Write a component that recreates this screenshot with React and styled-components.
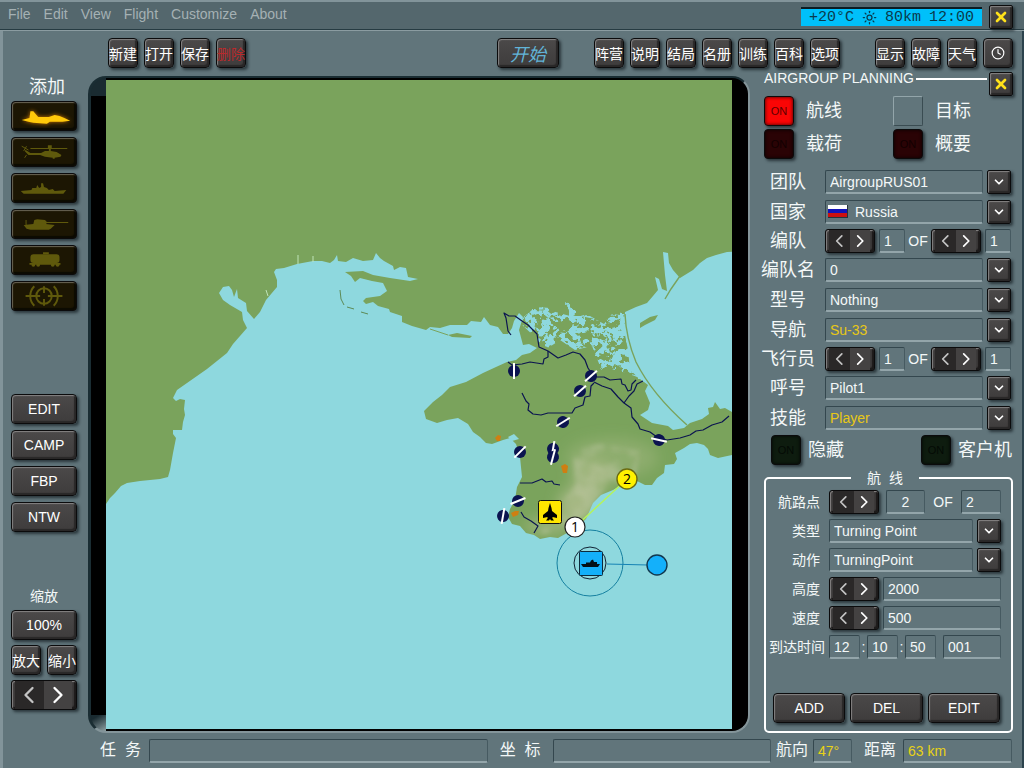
import React, { useRef } from 'react';
import styled, { createGlobalStyle, css } from 'styled-components';
import { X, Clock4, ChevronDown, ChevronLeft, ChevronRight, Sun } from 'lucide-react';

const addIcons = [
  { name: 'plane', node: <PlaneSide /> },
  { name: 'helicopter', node: <HeliSide /> },
  { name: 'ship', node: <ShipSide /> },
  { name: 'vehicle', node: <TankSide /> },
  { name: 'train', node: <WagonSide /> },
  { name: 'target', node: <TargetMark /> },
];

const airfields = [
  [514, 371, 90],
  [591, 376, -42],
  [580, 391, -42],
  [563, 422, -32],
  [520, 452, -45],
  [553, 449, -80],
  [553, 457, -75],
  [659, 440, 12],
  [518, 501, -22],
  [503, 516, -80],
];

function App() {
  return (
    <>
      <GlobalStyle />
      <Page>
        <MenuBar>
          <Menu>
            {['File', 'Edit', 'View', 'Flight', 'Customize', 'About'].map((m) => (
              <MenuItem key={m} href='#'>
                {m}
              </MenuItem>
            ))}
          </Menu>
          <Lcd>
            <span>+20°C</span>
            <Sun size={15} strokeWidth={2} />
            <span>80km</span>
            <span>12:00</span>
          </Lcd>
          <CloseKey />
        </MenuBar>

        <Toolbar>
          <KeyGroup $first>
            <Key>新建</Key>
            <Key>打开</Key>
            <Key>保存</Key>
            <Key $red>删除</Key>
          </KeyGroup>
          <StartKey>开始</StartKey>
          <KeyGroup>
            {['阵营', '说明', '结局', '名册', '训练', '百科', '选项'].map((t) => (
              <Key key={t}>{t}</Key>
            ))}
          </KeyGroup>
          <KeyGroup>
            <Key>显示</Key>
            <Key>故障</Key>
            <Key>天气</Key>
            <Key aria-label='clock'>
              <Clock4 size={14} strokeWidth={2} />
            </Key>
          </KeyGroup>
        </Toolbar>

        <Body>
          <Sidebar>
            <SideTitle>添加</SideTitle>
            <SideGroup>
              {addIcons.map((i, n) => (
                <UnitKey key={i.name} aria-label={i.name} $lit={n === 0}>
                  {i.node}
                </UnitKey>
              ))}
            </SideGroup>
            <SideGroup $mid>
              <TextKey>EDIT</TextKey>
              <TextKey>CAMP</TextKey>
              <TextKey>FBP</TextKey>
              <TextKey>NTW</TextKey>
            </SideGroup>
            <ZoomTitle>缩放</ZoomTitle>
            <ZoomGroup>
              <TextKey>100%</TextKey>
              <KeyPair>
                <Key>放大</Key>
                <Key>缩小</Key>
              </KeyPair>
              <Stepper name='zoom' wide />
            </ZoomGroup>
          </Sidebar>

          <MapFrame>
            <MapView />
          </MapFrame>

          <Panel>
            <PanelHead>
              <PanelTitle>AIRGROUP PLANNING</PanelTitle>
              <PanelRule />
              <CloseKey />
            </PanelHead>
            <Modes>
              <Toggle id='route' label='航线' tone='red' on />
              <Toggle id='target' label='目标' tone='none' />
              <Toggle id='load' label='载荷' tone='red' />
              <Toggle id='summary' label='概要' tone='red' />
            </Modes>

            <Rows>
              <Combo id='group' label='团队' value='AirgroupRUS01' />
              <Combo id='country' label='国家' value='Russia' flag />
              <Counter id='flight' label='编队' />
              <Combo id='flightname' label='编队名' value='0' />
              <Combo id='model' label='型号' value='Nothing' />
              <Combo id='lead' label='导航' value='Su-33' yellow />
              <Counter id='pilot' label='飞行员' />
              <Combo id='callsign' label='呼号' value='Pilot1' />
              <Combo id='skill' label='技能' value='Player' yellow />
            </Rows>

            <Options>
              <Toggle id='hidden' label='隐藏' tone='green' tight />
              <Toggle id='client' label='客户机' tone='green' tight />
            </Options>

            <RouteBox>
              <RouteLegend>航&nbsp; 线</RouteLegend>
              <RouteRows>
                <RouteRow>
                  <RouteLabel htmlFor='wp'>航路点</RouteLabel>
                  <Stepper name='waypoint' />
                  <Cell $w={39} $left={3}>
                    <TextInput id='wp' defaultValue='2' $center />
                  </Cell>
                  <Of>OF</Of>
                  <Cell $w={40}>
                    <TextInput aria-label='waypoint count' defaultValue='2' />
                  </Cell>
                </RouteRow>
                <RouteCombo id='wptype' label='类型' value='Turning Point' />
                <RouteCombo id='action' label='动作' value='TurningPoint' />
                <RouteRow>
                  <RouteLabel htmlFor='alt'>高度</RouteLabel>
                  <Stepper name='altitude' />
                  <Cell>
                    <TextInput id='alt' defaultValue='2000' />
                  </Cell>
                </RouteRow>
                <RouteRow>
                  <RouteLabel htmlFor='speed'>速度</RouteLabel>
                  <Stepper name='speed' />
                  <Cell>
                    <TextInput id='speed' defaultValue='500' />
                  </Cell>
                </RouteRow>
                <RouteRow>
                  <RouteLabel htmlFor='hh' $long>
                    到达时间
                  </RouteLabel>
                  <Times>
                    <Cell $w={31}>
                      <TextInput id='hh' defaultValue='12' />
                    </Cell>
                    <Colon>:</Colon>
                    <Cell $w={31}>
                      <TextInput aria-label='minutes' defaultValue='10' />
                    </Cell>
                    <Colon>:</Colon>
                    <Cell $w={31}>
                      <TextInput aria-label='seconds' defaultValue='50' />
                    </Cell>
                    <Cell $left={7}>
                      <TextInput aria-label='day' defaultValue='001' />
                    </Cell>
                  </Times>
                </RouteRow>
              </RouteRows>
              <RouteActions>
                <TextKey>ADD</TextKey>
                <TextKey>DEL</TextKey>
                <TextKey>EDIT</TextKey>
              </RouteActions>
            </RouteBox>
          </Panel>
        </Body>

        <StatusBar>
          <StatusMain>
            <StatusLabel htmlFor='task'>任&nbsp; 务</StatusLabel>
            <Cell $grow={14}>
              <TextInput id='task' />
            </Cell>
            <StatusLabel htmlFor='coord' $roomy>
              坐&nbsp; 标
            </StatusLabel>
            <Cell $grow={9}>
              <TextInput id='coord' />
            </Cell>
          </StatusMain>
          <StatusSide>
            <StatusLabel htmlFor='heading'>航向</StatusLabel>
            <Cell $w={39}>
              <TextInput id='heading' defaultValue='47°' $yellow />
            </Cell>
            <StatusLabel htmlFor='range' $apart>
              距离
            </StatusLabel>
            <Cell>
              <TextInput id='range' defaultValue='63 km' $yellow />
            </Cell>
          </StatusSide>
        </StatusBar>
      </Page>
    </>
  );
}

export default App;

function CloseKey() {
  return (
    <SmallKey aria-label='close' $yellow>
      <X size={16} strokeWidth={4} />
    </SmallKey>
  );
}

function Stepper({ name, wide }) {
  return (
    <StepWrap $wide={wide}>
      <StepKey aria-label={name + ' previous'} $dim>
        <ChevronLeft size={wide ? 28 : 22} strokeWidth={2} />
      </StepKey>
      <StepKey aria-label={name + ' next'}>
        <ChevronRight size={wide ? 28 : 22} strokeWidth={2} />
      </StepKey>
    </StepWrap>
  );
}

function Toggle({ id, label, tone, on, tight }) {
  return (
    <ToggleWrap $tight={tight}>
      <ToggleKey id={id} $tone={tone} $on={on} aria-pressed={!!on}>
        {tone === 'none' ? '' : 'ON'}
      </ToggleKey>
      <ToggleLabel htmlFor={id}>{label}</ToggleLabel>
    </ToggleWrap>
  );
}

function Picker({ id, value, flag, yellow }) {
  const ref = useRef(null);
  return (
    <>
      <Cell>
        {flag && <Flag />}
        <Select id={id} ref={ref} $yellow={yellow}>
          <option>{value}</option>
        </Select>
      </Cell>
      <SmallKey aria-label={'open ' + id} onClick={() => ref.current.showPicker()}>
        <ChevronDown size={14} strokeWidth={3} />
      </SmallKey>
    </>
  );
}

function Combo({ id, label, ...rest }) {
  return (
    <Row>
      <Label htmlFor={id}>{label}</Label>
      <RowBody>
        <Picker id={id} {...rest} />
      </RowBody>
    </Row>
  );
}

function RouteCombo({ id, label, ...rest }) {
  return (
    <RouteRow>
      <RouteLabel htmlFor={id}>{label}</RouteLabel>
      <Picker id={id} {...rest} />
    </RouteRow>
  );
}

function Counter({ id, label }) {
  return (
    <Row $low>
      <Label htmlFor={id}>{label}</Label>
      <RowBody>
        <Stepper name={id} />
        <Cell $w={26}>
          <TextInput id={id} defaultValue='1' />
        </Cell>
        <Of $close>OF</Of>
        <Stepper name={id + ' total'} />
        <Cell $w={26}>
          <TextInput aria-label={id + ' total'} defaultValue='1' />
        </Cell>
      </RowBody>
    </Row>
  );
}

function MapView() {
  return (
    <MapSvg viewBox='106 80 626 649' preserveAspectRatio='xMidYMid slice'>
      <defs>
        <filter id='soft' x='-50%' y='-50%' width='200%' height='200%'>
          <feGaussianBlur stdDeviation='7' />
        </filter>
        <filter id='ridge' x='-20%' y='-20%' width='140%' height='140%' colorInterpolationFilters='sRGB'>
          <feTurbulence type='fractalNoise' baseFrequency='0.06' numOctaves='3' seed='4' />
          <feColorMatrix values='0 0 0 0 0.78  0 0 0 0 0.8  0 0 0 0 0.68  0 4 0 0 -1.6' />
          <feComposite in2='SourceGraphic' operator='in' />
          <feGaussianBlur stdDeviation='2' />
        </filter>
        <filter id='marsh' x='0' y='0' width='100%' height='100%' colorInterpolationFilters='sRGB'>
          <feTurbulence type='fractalNoise' baseFrequency='0.13 0.15' numOctaves='3' seed='12' />
          <feColorMatrix values='0 0 0 0 0.557  0 0 0 0 0.847  0 0 0 0 0.871  20 0 0 0 -9.4' />
          <feComposite in2='SourceGraphic' operator='in' />
        </filter>
        <filter id='islets' x='0' y='0' width='100%' height='100%' colorInterpolationFilters='sRGB'>
          <feTurbulence type='fractalNoise' baseFrequency='0.14' numOctaves='3' seed='31' />
          <feColorMatrix values='0 0 0 0 0.478  0 0 0 0 0.639  0 0 0 0 0.361  20 0 0 0 -10.8' />
          <feComposite in2='SourceGraphic' operator='in' />
        </filter>
        <filter id='coast' x='-10%' y='-10%' width='120%' height='120%'>
          <feTurbulence type='fractalNoise' baseFrequency='0.2' numOctaves='2' seed='3' />
          <feDisplacementMap in='SourceGraphic' scale='9' xChannelSelector='R' yChannelSelector='G' />
        </filter>
      </defs>

      <rect x='-400' y='-400' width='2000' height='2000' fill='#7aa35c' />

      {/* mountains */}
      <g fill='#b9c296' filter='url(#soft)'>
        <ellipse cx='612' cy='458' rx='46' ry='20' opacity='0.3' />
        <ellipse cx='592' cy='478' rx='20' ry='17' opacity='0.55' />
        <ellipse cx='576' cy='506' rx='18' ry='18' opacity='0.7' />
        <ellipse cx='547' cy='526' rx='22' ry='7' opacity='0.6' />
      </g>
      <path
        d='M572 450 L600 444 L640 450 L636 474 L605 490 L585 515 L565 532 L540 534 L556 512 L576 484 Z'
        fill='#fff'
        opacity='0.4'
        filter='url(#ridge)'
      />

      {/* Sivash */}
      <path
        filter='url(#marsh)'
        fill='#8ed8de'
        d='M519 322 L533 308 L552 311 L570 316 L590 316 L604 324 L612 314 L628 316 L632 350 L644 380 L630 374 L600 366 L592 346 L575 350 L560 340 L545 350 L536 338 Z'
      />
      <g filter='url(#coast)' fill='#8ed8de'>
        <path d='M524 318 L534 309 L550 310 L556 322 L546 328 L536 322 L530 326 Z' />
        <path d='M566 302 L571 305 L576 314 L570 317 L567 312 Z' />
        <path d='M570 320 L584 316 L588 324 L606 330 L598 336 L584 330 L574 332 Z' />
        <path d='M608 318 L626 314 L632 345 L644 380 L632 375 L622 366 L600 368 L610 356 L616 344 L608 336 Z' />
        <path d='M596 344 L610 340 L604 352 L596 356 Z' />
      </g>
      <path
        filter='url(#islets)'
        d='M522 318 L534 308 L552 310 L590 318 L626 314 L630 350 L640 376 L600 368 L590 336 L540 330 Z'
      />

      {/* Azov sea */}
      <path
        fill='#8ed8de'
        d='M625 312 L636 307 L647 303 L653 296 L658 290 L655 277 L659 279 L662 289 L667 291 L665 275 L663 252 L668 253 L669 263 L673 270 L680 278 L693 270 L700 263 L707 258 L716 255 L727 252 L760 250 L760 412 L732 412 L725 408 L720 409 L715 402 L713 407 L708 408 L709 414 L702 419 L690 423 L684 428 L673 430 L668 426 L652 423 L640 415 L648 410 L650 403 L645 391 L648 385 L640 379 L630 370 L628 350 L624 330 Z'
      />
      <path
        d='M625 314 Q626 338 636 362 Q652 394 687 425'
        fill='none'
        stroke='#7aa35c'
        strokeWidth='1.4'
      />
      <path d='M640 323 L650 317 L658 315 L655 320 L645 325 L640 328 Z' fill='#7aa35c' />
      <path d='M665 299 L671 289 L680 276' fill='none' stroke='#7aa35c' strokeWidth='1.4' />

      {/* Black sea */}
      <path
        fill='#8ed8de'
        d='M106 504 L110 498 L115 493 L121 486 L127 483 L140 481 L160 479 L168 477 L170 470 L173 453 L176 438 L173 434 L173 430 L182 430 L183 422 L185 415 L184 409 L185 400 L180 399 L176 401 L173 398 L177 390 L187 383 L207 369 L227 353 L233 344 L247 328 L243 320 L242 312 L230 305 L223 300 L219 293 L223 287 L229 286 L232 290 L234 297 L237 289 L238 298 L246 303 L247 311 L254 319 L260 312 L266 300 L277 287 L277 280 L274 272 L276 269 L284 268 L297 264 L313 261 L322 261 L330 263 L334 260 L337 255 L338 261 L346 262 L353 258 L363 261 L373 260 L376 253 L380 258 L384 261 L393 266 L394 270 L400 267 L406 268 L408 277 L418 279 L410 281 L390 278 L373 275 L363 271 L345 272 L351 276 L355 282 L360 278 L372 281 L383 283 L387 291 L380 296 L373 297 L366 298 L363 301 L366 304 L373 302 L378 306 L389 309 L390 312 L402 316 L402 322 L412 326 L426 330 L430 327 L440 328 L450 325 L467 325 L471 321 L481 322 L484 317 L490 325 L498 327 L503 334 L508 334 L512 328 L514 321 L519 313 L523 317 L519 330 L523 345 L529 344 L537 348 L530 353 L522 355 L516 360 L507 362 L496 367 L483 373 L466 382 L450 387 L442 395 L433 402 L424 411 L426 419 L437 423 L447 420 L458 418 L468 424 L473 432 L480 437 L486 443 L492 444 L503 440 L510 438 L516 444 L520 457 L522 477 L517 487 L515 500 L510 509 L508 517 L512 524 L520 526 L526 533 L534 535 L540 539 L550 537 L558 538 L567 533 L576 528 L586 519 L593 503 L601 495 L613 490 L622 485 L637 481 L645 485 L652 485 L657 478 L664 473 L665 465 L674 464 L677 459 L675 453 L684 448 L690 444 L697 443 L704 445 L708 449 L710 455 L718 458 L732 455 L800 455 L800 1000 L-100 1000 L-100 504 Z'
      />
      <path d='M340 290 L341 299 L344 305 M347 307 L354 309 M361 312 L368 314' stroke='#5d8a55' fill='none' />
      <path d='M448 335 L457 333 L472 336 L470 338 L452 337 Z' fill='#7aa35c' />
      <path d='M430 329 L448 335' stroke='#7aa35c' fill='none' />
      <path d='M508 437 L514 434 L519 439 L512 441 Z' fill='#8ed8de' />
      <path d='M298 255 V264 M313 256 V262 M266 290 L268 296' stroke='#bfe4b8' fill='none' />

      {/* railways */}
      <g fill='none' stroke='#0b1450' strokeWidth='1.2' strokeLinejoin='round'>
        <path d='M511 335 L508 331 L506 318 L504 313 L509 316 L515 316 L522 321 L528 325 L534 331 L537 334 L539 347 L548 351 L558 358 L566 355 L573 352 L580 354 L585 360 L588 368 L592 374' />
        <path d='M508 362 L512 365 L522 364 L530 362 L543 364 L544 359 L548 357 L548 351' />
        <path d='M522 393 L526 401 L529 404 L528 410 L533 414 L541 415 L548 413 L572 413 L575 408 L583 405 L585 397 L590 396 L591 386 L594 383' />
        <path d='M594 382 L602 386 L611 389 L618 397 L624 403 L631 408 L632 417 L638 424 L640 429 L650 432 L657 437 L667 440 L680 438 L690 435 L696 431 L703 430 L712 425 L722 422 L729 416' />
        <path d='M595 377 L604 377 L610 380 L621 379 L622 384 L625 385 L628 391 L631 390 L632 384 L636 380' />
        <path d='M624 403 L629 396 L634 391 L637 384 L643 381' />
        <path d='M520 483 L532 483 L542 479 L546 482 L552 481 L554 484 L560 485' />
        <path d='M521 512 L524 517 L531 521 L538 526 L534 533' />
      </g>

      {airfields.map(([x, y, a]) => (
        <g key={x + '-' + y} transform={`translate(${x} ${y}) rotate(${a})`}>
          <circle r='6' fill='#0b1450' />
          <path d='M-8 0 H8' stroke='#fff' strokeWidth='2' />
        </g>
      ))}
      <g fill='#cf7f12'>
        <path d='M495 438 L498 435 L501 436 L500 441 L497 441 Z' />
        <path d='M561 466 L565 464 L568 466 L567 473 L563 473 Z' />
        <path d='M511 513 L515 511 L519 511 L518 515 L513 517 Z' />
      </g>

      {/* route */}
      <path d='M575 527 L627 479' stroke='#b5f45a' strokeWidth='1.5' />
      <circle cx='590' cy='563' r='33' fill='none' stroke='#1580a0' />
      <circle cx='590' cy='563' r='16' fill='none' stroke='#123' />
      <path d='M607 564 L648 565' stroke='#1583b5' />
      <circle cx='657' cy='565' r='10' fill='#14b0fa' stroke='#12384e' strokeWidth='1.4' />
      <circle cx='627' cy='479' r='10' fill='#fff200' stroke='#6a6a12' strokeWidth='1.4' />
      <circle cx='575' cy='527' r='10' fill='#fff' stroke='#222' strokeWidth='1.2' />
      <MapText x='627' y='484'>2</MapText>
      <MapText x='575' y='532'>1</MapText>

      <rect x='538.5' y='500.5' width='23' height='23' rx='2' fill='#ffe600' stroke='#111' />
      <path
        d='M550 503 L551.5 508 L552 511 L557 515 V518 L552.5 517 V518.5 L554 520.5 L551 520.5 L550 519 L549 520.5 L546 520.5 L547.5 518.5 V517 L543 518 V515 L548 511 L548.5 508 Z'
        fill='#000'
      />
      <rect x='579.5' y='551.5' width='23' height='24' rx='1' fill='#14b0fa' stroke='#0c2a3c' />
      <path
        d='M581 564 H586 V562.500 H590 L591 560.500 L593 559.500 L594 562 L597 562 V564 H600 L598 567 H583 Z'
        fill='#031018'
      />
    </MapSvg>
  );
}

function PlaneSide() {
  return (
    <UnitSvg viewBox='0 0 66 30'>
      <path d='M10 19 L18 17 L19 10 L22 10 L27 16 L38 16 L44 14 L49 15 L54 17 L60 20 L52 21 L39 21 L36 23 L22 22 L17 21 Z' />
    </UnitSvg>
  );
}

function HeliSide() {
  return (
    <UnitSvg viewBox='0 0 66 30'>
      <path d='M19 11 H57 V12 H40 V14 L46 15 L51 18 L50 20 L44 21 V22 H42 V21 L34 20 L29 18 L17 18 L13 14 L14 13 L19 16 L30 16 L34 14 L38 14 V12 H19 Z M37 8 H41 V11 H37 Z' />
      <path d='M10 9 L17 13 M12 14 L15 9 M15 18 L13 21' stroke='currentColor' />
    </UnitSvg>
  );
}

function ShipSide() {
  return (
    <UnitSvg viewBox='0 0 66 30'>
      <path d='M9 18 L20 17 L21 15 L25 15 L26 12 L28 15 L30 14 L30 10 L32 10 L33 14 L36 15 L38 17 L42 16 L44 18 L56 17 L53 21 L12 21 Z' />
    </UnitSvg>
  );
}

function TankSide() {
  return (
    <UnitSvg viewBox='0 0 66 30'>
      <path d='M12 16 L22 15 L23 11 L26 10 L34 11 L36 13 H58 V14 H36 L35 15 L44 16 L40 20 L38 21 H19 L15 20 Z M14 11 H15 V16 H14 Z' />
    </UnitSvg>
  );
}

function WagonSide() {
  return (
    <UnitSvg viewBox='0 0 66 30'>
      <rect x='19' y='9' width='30' height='9' rx='3' />
      <path d='M32 7 H38 V9 H32 Z M18 18 H50 V20 H18 Z' />
      <circle cx='22' cy='20' r='2' />
      <circle cx='27' cy='20' r='2' />
      <circle cx='42' cy='20' r='2' />
      <circle cx='47' cy='20' r='2' />
    </UnitSvg>
  );
}

function TargetMark() {
  return (
    <UnitSvg viewBox='0 0 66 30'>
      <g fill='none' stroke='currentColor' strokeWidth='2'>
        <circle cx='33' cy='15' r='8' />
        <path d='M23 5 A14 14 0 0 0 23 25 M43 5 A14 14 0 0 1 43 25 M14 15 H29 M37 15 H52 M33 5 V12 M33 18 V25' />
      </g>
    </UnitSvg>
  );
}

const GlobalStyle = createGlobalStyle`
  * {
    box-sizing: border-box;
  }
  body {
    margin: 0;
    background: #61757b;
    font-family: 'Liberation Sans', 'Noto Sans CJK SC', sans-serif;
    font-size: 14px;
    color: #f4f8f8;
  }
  button, input, select {
    font: inherit;
    color: inherit;
  }
`;

const Page = styled.div`
  display: flex;
  flex-direction: column;
  min-height: 100vh;
  background: #61757b;
  border-bottom: 2px solid #46585e;
  box-shadow: inset 3px 0 0 #82949a, inset -2px 0 0 #2c434d;
`;

const MenuBar = styled.header`
  display: flex;
  align-items: center;
  gap: 7px;
  height: 30px;
  padding: 2px 11px 0 8px;
  background: #54676d;
  border-top: 2px solid #82949a;
  border-bottom: 1px solid #263b42;
  box-shadow: 0 1px 0 #8b9ca1;
`;
const Menu = styled.nav`
  display: flex;
  gap: 13px;
  margin-right: auto;
  padding-bottom: 5px;
`;
const MenuItem = styled.a`
  color: #a5b1b4;
  text-decoration: none;
`;
const Lcd = styled.div`
  display: flex;
  align-items: center;
  justify-content: center;
  gap: 8px;
  width: 181px;
  height: 19px;
  border-top: 2px solid #0b1c22;
  background: #00c0fa;
  color: #0a3a4c;
  font-family: 'Liberation Mono', monospace;
  font-size: 15px;
`;

const keyLook = css`
  display: flex;
  align-items: center;
  justify-content: center;
  padding: 0;
  border: 1px solid #0b0b0c;
  border-radius: 4px;
  background: linear-gradient(#4b4949, #3e3c3c);
  box-shadow: inset 1px 1px 1px #858383, inset -2px -2px 1px #292727, 2px 2px 3px rgba(20, 30, 34, 0.7);
  color: #fff;
  white-space: nowrap;
`;

const Toolbar = styled.div`
  display: flex;
  gap: 35px;
  padding: 8px 11px 2px 108px;
`;
const KeyGroup = styled.div`
  display: flex;
  gap: 6px;
  margin-right: ${(p) => (p.$first ? 'auto' : '0')};
`;
const Key = styled.button`
  ${keyLook}
  width: 30px;
  height: 30px;
  font-size: 14px;
  color: ${(p) => (p.$red ? '#b92a2c' : '#fff')};
`;
const StartKey = styled(Key)`
  width: 62px;
  font-size: 18px;
  font-style: italic;
  color: #62b4d8;
`;
const TextKey = styled(Key)`
  flex: 1 0 30px;
  width: 100%;
  padding-bottom: 1px;
`;
const SmallKey = styled.button`
  ${keyLook}
  flex: none;
  width: 24px;
  height: 24px;
  border-radius: 2px;
  color: ${(p) => (p.$yellow ? '#ffe11a' : '#fff')};
`;

const Body = styled.main`
  display: flex;
  flex: 1;
`;

const Sidebar = styled.aside`
  display: flex;
  flex-direction: column;
  width: 88px;
  padding: 5px 11px 0;
`;
const SideTitle = styled.h2`
  margin: 0 0 2px;
  padding-left: 6px;
  font-size: 18px;
  font-weight: 400;
  line-height: 24px;
  text-align: center;
`;
const SideGroup = styled.div`
  display: flex;
  flex-direction: column;
  gap: 6px;
  margin-top: ${(p) => (p.$mid ? '83px' : '0')};
`;
const ZoomTitle = styled(SideTitle)`
  margin: 52px 0 2px;
  padding: 0;
  font-size: 14px;
`;
const ZoomGroup = styled.div`
  display: flex;
  flex-direction: column;
  gap: 5px;
`;
const KeyPair = styled.div`
  display: flex;
  justify-content: space-between;
`;
const UnitKey = styled.button`
  ${keyLook}
  height: 30px;
  background: #1c1603;
  box-shadow: inset 1px 1px 1px #6a6455, inset -2px -2px 1px #0c0a02, 2px 2px 3px rgba(20, 30, 34, 0.7);
  color: ${(p) => (p.$lit ? '#ffc90a' : '#5f590c')};
  ${(p) =>
    p.$lit &&
    css`
      svg {
        filter: drop-shadow(0 0 2px #d07a00);
      }
    `}
`;
const UnitSvg = styled.svg`
  width: 66px;
  height: 30px;
  fill: currentColor;
`;

const StepWrap = styled.div`
  display: flex;
  flex: none;
  width: ${(p) => (p.$wide ? '100%' : '50px')};
  height: ${(p) => (p.$wide ? '30px' : '24px')};
  padding: 0 4px 0 3px;
  border: 1px solid #0b0b0c;
  border-radius: 3px;
  background: #3c3a3a;
  box-shadow: inset 1px 1px 1px #858383, inset -2px -2px 1px #1c1a1a, 2px 2px 3px rgba(20, 30, 34, 0.7);
`;
const StepKey = styled.button`
  display: flex;
  flex: 1;
  align-items: center;
  justify-content: center;
  min-width: 0;
  padding: 0;
  border: 0;
  background: ${(p) => (p.$dim ? '#2a2828' : '#444242')};
  color: ${(p) => (p.$dim ? '#c4c4c4' : '#fff')};
`;

const MapFrame = styled.section`
  display: flex;
  flex: 1;
  min-width: 0;
  margin-top: 6px;
  padding: 2px 16px 2px 15px;
  border: 2px solid #1a2d33;
  border-left-width: 3px;
  border-right-color: #84959a;
  border-bottom-color: #84959a;
  border-radius: 18px;
  background:
    linear-gradient(#1a2b31, #1a2b31) 0 0 / 15px 18px no-repeat,
    linear-gradient(150deg, #1a2b31 20%, #8fa0a4) 0 100% / 15px 16px no-repeat,
    #000;
`;
const MapSvg = styled.svg`
  display: block;
  flex: 1;
  width: 100%;
  min-width: 0;
  height: auto;
`;
const MapText = styled.text`
  font-family: 'Open Sans', sans-serif;
  font-size: 14px;
  text-anchor: middle;
  fill: #000;
`;

const Panel = styled.section`
  display: flex;
  flex-direction: column;
  width: 274px;
  padding: 0 11px 0 14px;
`;
const PanelHead = styled.div`
  display: flex;
  align-items: flex-start;
  gap: 2px;
  height: 26px;
  ${SmallKey} {
    margin-top: 2px;
  }
`;
const PanelTitle = styled.h1`
  margin: 0;
  font-size: 14px;
  font-weight: 400;
  line-height: 16px;
`;
const PanelRule = styled.hr`
  flex: 1;
  height: 2px;
  margin: 8px 0 0;
  border: 0;
  background: #fff;
`;

const Modes = styled.div`
  display: grid;
  grid-template-columns: 129px 1fr;
  row-gap: 3px;
`;
const Options = styled.div`
  display: grid;
  grid-template-columns: 150px 1fr;
  margin-top: 5px;
  padding-left: 7px;
`;
const ToggleWrap = styled.div`
  display: flex;
  align-items: center;
  gap: ${(p) => (p.$tight ? '7px' : '12px')};
`;
const tones = {
  red: ['#2a0305', '#120001'],
  redOn: ['#fa0505', '#5e0000'],
  green: ['#0e1c0f', '#040a05'],
  none: ['#61757b', '#61757b'],
};
const toneOf = (p) => tones[p.$on ? p.$tone + 'On' : p.$tone];
const ToggleKey = styled.button`
  ${keyLook}
  width: 30px;
  height: 30px;
  font-size: 11px;
  background: ${(p) => toneOf(p)[0]};
  color: ${(p) => toneOf(p)[1]};
  box-shadow: inset 0 0 3px 1px rgba(0, 0, 0, 0.5), 2px 2px 3px rgba(20, 30, 34, 0.7);
  ${(p) =>
    p.$tone === 'none' &&
    css`
      border-color: #93a5aa #3a4c52 #3a4c52 #93a5aa;
      border-radius: 2px;
      box-shadow: none;
    `}
`;
const ToggleLabel = styled.label`
  font-size: 18px;
  line-height: 24px;
  white-space: nowrap;
`;

const Rows = styled.div`
  display: flex;
  flex-direction: column;
  gap: 6px;
  margin: 11px 0 0 -4px;
  padding-right: 2px;
`;
const Row = styled.div`
  display: flex;
  align-items: center;
  gap: 9px;
  height: ${(p) => (p.$low ? '22px' : '24px')};
`;
const Label = styled.label`
  flex: none;
  width: 56px;
  font-size: 18px;
  line-height: 24px;
  text-align: center;
`;
const RowBody = styled.div`
  display: flex;
  flex: 1;
  align-items: center;
  gap: 4px;
  min-width: 0;
`;
const Cell = styled.div`
  display: flex;
  align-items: center;
  flex: ${(p) => (p.$w ? `0 0 ${p.$w}px` : `${p.$grow || 1} 1 0`)};
  min-width: 0;
  height: 24px;
  margin-left: ${(p) => p.$left || 0}px;
  border: 1px solid #34474e;
  border-right-color: #465a61;
  border-bottom: 2px solid #93a5aa;
  border-radius: 2px;
`;
const TextInput = styled.input`
  width: 100%;
  min-width: 0;
  padding: 0 4px;
  border: 0;
  outline: 0;
  background: none;
  color: ${(p) => (p.$yellow ? '#e8d216' : '#f4f8f8')};
  text-align: ${(p) => (p.$center ? 'center' : 'left')};
`;
const Select = styled.select`
  flex: 1;
  min-width: 0;
  padding: 0 4px;
  border: 0;
  outline: 0;
  appearance: none;
  background: none;
  color: ${(p) => (p.$yellow ? '#e8c816' : '#f4f8f8')};
`;
const Flag = styled.span`
  width: 20px;
  height: 13px;
  margin: 0 3px 0 2px;
  border: 1px solid #26333a;
  border-width: 0 1px 1px 0;
  background: linear-gradient(#fff 33%, #1212b8 33% 66%, #cc1010 66%);
`;
const Of = styled.span`
  flex: 1;
  margin: ${(p) => (p.$close ? '0 -4px' : '0')};
  text-align: center;
`;

const RouteBox = styled.fieldset`
  min-width: 0;
  margin: 5px 0 0;
  padding: 4px 10px 8px 3px;
  border: 2px solid #fff;
  border-radius: 5px;
`;
const RouteLegend = styled.legend`
  margin: 0 auto;
  padding: 0 16px;
  font-size: 14px;
  line-height: 16px;
`;
const RouteRows = styled.div`
  display: flex;
  flex-direction: column;
  gap: 5px;
`;
const RouteRow = styled.div`
  display: flex;
  align-items: center;
  gap: 4px;
  height: 24px;
`;
const RouteLabel = styled.label`
  flex: none;
  width: 56px;
  padding-right: ${(p) => (p.$long ? '0' : '5px')};
  line-height: 24px;
  text-align: right;
  white-space: nowrap;
`;
const Times = styled.div`
  display: flex;
  flex: 1;
  align-items: center;
  min-width: 0;
`;
const Colon = styled.span`
  width: 7px;
  text-align: center;
`;
const RouteActions = styled.div`
  display: flex;
  gap: 5px;
  margin: 34px 0 0;
  padding: 0 1px 0 4px;
`;

const StatusBar = styled.footer`
  display: flex;
  height: 35px;
  padding-top: 6px;
`;
const StatusMain = styled.div`
  display: flex;
  flex: 1;
  gap: 8px;
  min-width: 0;
  padding-left: 100px;
`;
const StatusSide = styled.div`
  display: flex;
  gap: 5px;
  width: 253px;
  padding: 0 12px 0 5px;
`;
const StatusLabel = styled.label`
  flex: none;
  margin: ${(p) => (p.$roomy ? '0 4px' : p.$apart ? '0 2px 0 7px' : '0')};
  font-size: 16px;
  line-height: 22px;
`;
